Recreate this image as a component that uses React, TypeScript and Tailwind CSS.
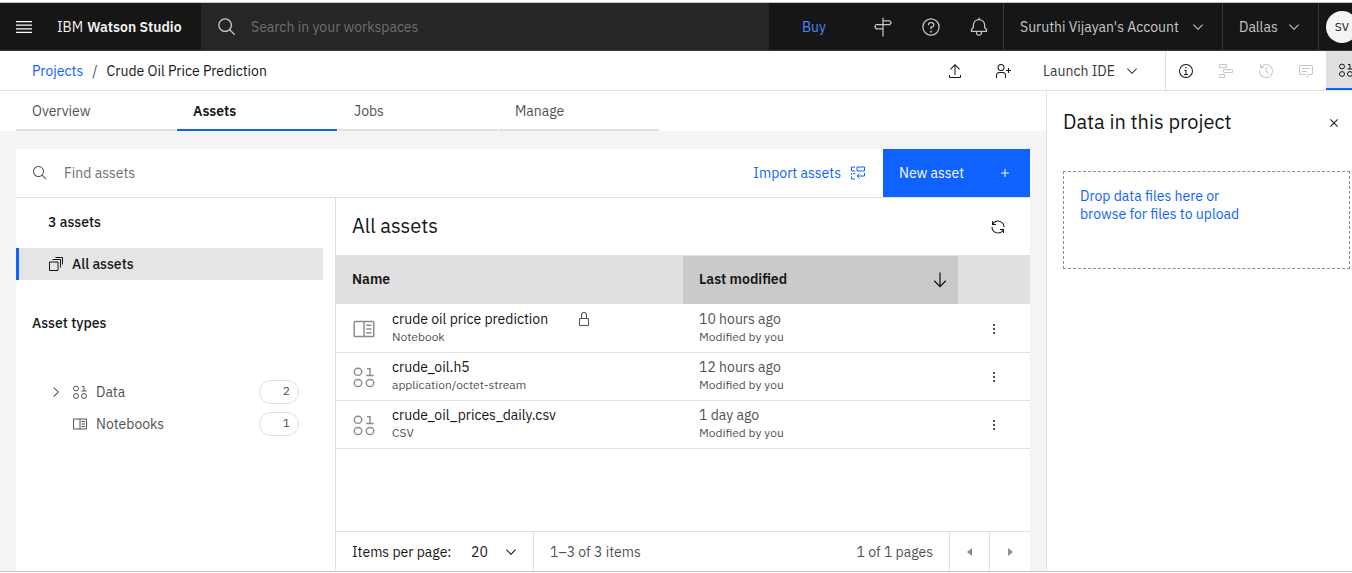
import type { ReactNode } from "react";

type IconProps = { className?: string };

function Icon({ className = "size-4", children }: IconProps & { children: ReactNode }) {
  return (
    <svg viewBox="0 0 32 32" fill="currentColor" aria-hidden="true" className={`shrink-0 ${className}`}>
      {children}
    </svg>
  );
}

const SearchIcon = ({ className }: IconProps) => (
  <Icon className={className}>
    <path d="M29 27.586l-7.552-7.552a11.018 11.018 0 1 0-1.414 1.414L27.586 29zM4 13a9 9 0 1 1 9 9 9.01 9.01 0 0 1-9-9z" />
  </Icon>
);

const ChevronDown = ({ className }: IconProps) => (
  <Icon className={className}>
    <path d="M16 22L6 12l1.4-1.4 8.6 8.6 8.6-8.6L26 12z" />
  </Icon>
);

const DataIcon = ({ className }: IconProps) => (
  <Icon className={className}>
    <g fill="none" stroke="currentColor" strokeWidth="2">
      <ellipse cx="8" cy="9" rx="5" ry="4.8" />
      <ellipse cx="8" cy="24" rx="5" ry="4.8" />
      <ellipse cx="24" cy="24" rx="5" ry="4.8" />
      <path d="M20 5h4v9M19 14h10" />
    </g>
  </Icon>
);

const NotebookIcon = ({ className }: IconProps) => (
  <Icon className={className}>
    <path d="M19 10h7v2h-7zM19 15h7v2h-7zM19 20h7v2h-7z" />
    <path d="M28 5H4a2 2 0 0 0-2 2v18a2 2 0 0 0 2 2h24a2 2 0 0 0 2-2V7a2 2 0 0 0-2-2zM4 7h11v18H4zm13 18V7h11v18z" />
  </Icon>
);

const rows = [
  { name: "crude oil price prediction", kind: "Notebook", time: "10 hours ago", notebook: true },
  { name: "crude_oil.h5", kind: "application/octet-stream", time: "12 hours ago", notebook: false },
  { name: "crude_oil_prices_daily.csv", kind: "CSV", time: "1 day ago", notebook: false },
];

const tabs = ["Overview", "Assets", "Jobs", "Manage"];

function TopBar() {
  return (
    <header className="mt-0.5 flex h-[49px] items-stretch border-t border-b border-t-[#c6c6c6] border-b-[#393939] bg-[#161616] text-[#c6c6c6]">
      <button aria-label="Menu" className="flex w-12 items-center justify-center text-white">
        <svg viewBox="0 0 20 20" fill="currentColor" className="size-5">
          <path d="M2 14.8h16V16H2zM2 11.2h16v1.2H2zM2 7.6h16v1.2H2zM2 4h16v1.2H2z" />
        </svg>
      </button>
      <a href="#" className="flex w-[153px] items-center gap-1 pl-[9px] whitespace-nowrap text-[#f4f4f4]">
        <span>IBM</span>
        <span className="font-semibold">Watson Studio</span>
      </a>
      <label className="flex min-w-0 flex-1 items-center gap-3.5 bg-[#262626] pl-4">
        <SearchIcon className="size-5" />
        <input
          aria-label="Search in your workspaces"
          placeholder="Search in your workspaces"
          className="min-w-0 flex-1 bg-transparent outline-none placeholder:text-[#6f6f6f]"
        />
      </label>
      <a href="#" className="flex w-[90px] items-center justify-center text-[#4589ff]">
        Buy
      </a>
      <button aria-label="Tutorials" className="flex w-12 items-center justify-center">
        <Icon className="size-5">
          <path
            fill="none"
            stroke="currentColor"
            strokeWidth="2"
            d="M16 1v30M16 6h11l2 3-2 3H5l-2 3.500 2 3.500h11"
          />
        </Icon>
      </button>
      <button aria-label="Help" className="flex w-12 items-center justify-center">
        <Icon className="size-5">
          <path d="M16 2a14 14 0 1 0 14 14A14 14 0 0 0 16 2zm0 26a12 12 0 1 1 12-12 12 12 0 0 1-12 12z" />
          <circle cx="16" cy="23.5" r="1.5" />
          <path d="M17 8h-1.500a4.490 4.490 0 0 0-4.500 4.500v.5h2v-.5a2.500 2.500 0 0 1 2.500-2.500H17a2.500 2.500 0 0 1 0 5h-2v4.500h2V17a4.500 4.500 0 0 0 0-9z" />
        </Icon>
      </button>
      <button aria-label="Notifications" className="flex w-12 items-center justify-center">
        <Icon className="size-5">
          <path d="M28.707 19.293L26 16.586V13a10.014 10.014 0 0 0-9-9.950V1h-2v2.050A10.014 10.014 0 0 0 6 13v3.586l-2.707 2.707A1 1 0 0 0 3 20v3a1 1 0 0 0 1 1h7v.777a5.152 5.152 0 0 0 4.500 5.199A5.006 5.006 0 0 0 21 25v-1h7a1 1 0 0 0 1-1v-3a1 1 0 0 0-.293-.707zM19 25a3 3 0 0 1-6 0v-1h6zm8-3H5v-1.586l2.707-2.707A1 1 0 0 0 8 17v-4a8 8 0 0 1 16 0v4a1 1 0 0 0 .293.707L27 20.414z" />
        </Icon>
      </button>
      <button className="flex w-[219px] items-center justify-between border-l border-[#393939] px-4 whitespace-nowrap">
        Suruthi Vijayan's Account
        <ChevronDown />
      </button>
      <button className="flex w-24 items-center justify-between border-l border-[#393939] px-4">
        Dallas
        <ChevronDown />
      </button>
      <button aria-label="Profile" className="flex w-[34px] items-center overflow-hidden border-l border-[#393939] pl-[7px]">
        <span className="flex size-8 shrink-0 items-center justify-center rounded-full bg-[#f4f4f4] text-xs text-[#161616]">SV</span>
      </button>
    </header>
  );
}

function ProjectBar() {
  return (
    <div className="flex h-10 items-stretch border-b border-[#e0e0e0]">
      <nav aria-label="Breadcrumb" className="flex flex-1 items-center gap-[9px] pl-8">
        <a href="#" className="text-[#0f62fe]">Projects</a>
        <span className="text-[#525252]">/</span>
        <span>Crude Oil Price Prediction</span>
      </nav>
      <button aria-label="Upload" className="flex w-12 items-center justify-center">
        <Icon>
          <path d="M26 24v4H6v-4H4v4a2 2 0 0 0 2 2h20a2 2 0 0 0 2-2v-4zM6 12l1.411 1.405L15 5.825V24h2V5.825l7.591 7.580L26 12 16 2z" />
        </Icon>
      </button>
      <button aria-label="Add collaborators" className="flex w-12 items-center justify-center">
        <Icon>
          <path d="M32 14h-4v-4h-2v4h-4v2h4v4h2v-4h4zM12 4a5 5 0 1 1-5 5 5 5 0 0 1 5-5m0-2a7 7 0 1 0 7 7 7 7 0 0 0-7-7zM22 30h-2v-5a5 5 0 0 0-5-5H9a5 5 0 0 0-5 5v5H2v-5a7 7 0 0 1 7-7h6a7 7 0 0 1 7 7z" />
        </Icon>
      </button>
      <button className="flex w-[138px] items-center gap-[9px] pl-4 text-[#393939]">
        Launch IDE
        <ChevronDown />
      </button>
      <div className="flex border-l border-[#e0e0e0]">
        <button aria-label="Information" className="flex w-10 items-center justify-center">
          <Icon>
            <path d="M17 22v-8h-4v2h2v6h-3v2h8v-2zM16 8a1.500 1.500 0 1 0 1.500 1.500A1.500 1.500 0 0 0 16 8z" />
            <path d="M16 30a14 14 0 1 1 14-14 14 14 0 0 1-14 14zm0-26a12 12 0 1 0 12 12A12 12 0 0 0 16 4z" />
          </Icon>
        </button>
        <button aria-label="Roadmap" className="flex w-10 items-center justify-center text-[#c6c6c6]">
          <Icon>
            <path fill="none" stroke="currentColor" strokeWidth="2" d="M3 3h14v6H3zM11 13h18v6H11zM3 23h10v6H3z" />
          </Icon>
        </button>
        <button aria-label="History" className="flex w-10 items-center justify-center text-[#c6c6c6]">
          <Icon>
            <path d="M20.590 22L15 16.410V7h2v8.580l5 5.010z" />
            <path d="M16 2A13.940 13.940 0 0 0 6 6.230V2H4v8h8V8H7.080A12 12 0 1 1 4 16H2A14 14 0 1 0 16 2z" />
          </Icon>
        </button>
        <button aria-label="Comments" className="flex w-10 items-center justify-center text-[#c6c6c6]">
          <Icon>
            <path d="M17.740 30L16 29l4-7h6a2 2 0 0 0 2-2V8a2 2 0 0 0-2-2H6a2 2 0 0 0-2 2v12a2 2 0 0 0 2 2h9v2H6a4 4 0 0 1-4-4V8a4 4 0 0 1 4-4h20a4 4 0 0 1 4 4v12a4 4 0 0 1-4 4h-4.840z" />
            <path d="M8 10h16v2H8zM8 16h10v2H8z" />
          </Icon>
        </button>
        <button
          aria-label="Data panel"
          className="flex w-[26px] items-center overflow-hidden border-b-2 border-[#0f62fe] bg-[#e0e0e0] pl-3"
        >
          <DataIcon />
        </button>
      </div>
    </div>
  );
}

function Sidebar() {
  return (
    <aside className="flex w-80 shrink-0 flex-col border-r border-[#e0e0e0]">
      <p className="mt-3.5 pl-8 text-sm/5 font-medium">3 assets</p>
      <button className="mt-4 mr-3 flex h-8 items-center gap-2 border-l-3 border-[#0f62fe] bg-[#e5e5e5] pl-[29px] font-medium">
        <Icon>
          <path fill="none" stroke="currentColor" strokeWidth="2" d="M3 12h17v17H3zM9 7h16v16M15 3h14v14" />
        </Icon>
        All assets
      </button>
      <h2 className="mt-[33px] pl-4 text-sm/5 font-medium">Asset types</h2>
      <ul className="mt-[47px] flex flex-col text-[#525252]">
        <li className="flex h-8 items-start pr-9 pl-8">
          <button className="flex h-6 flex-1 items-center gap-2">
            <Icon>
              <path d="M22 16L12 26l-1.400-1.400 8.600-8.600-8.600-8.600L12 6z" />
            </Icon>
            <DataIcon />
            Data
          </button>
          <span className="h-6 w-10 rounded-full border border-[#e0e0e0] pr-2 text-right text-xs/5">2</span>
        </li>
        <li className="flex h-8 items-start pr-9 pl-14">
          <button className="flex h-6 flex-1 items-center gap-2">
            <NotebookIcon />
            Notebooks
          </button>
          <span className="h-6 w-10 rounded-full border border-[#e0e0e0] pr-2 text-right text-xs/5">1</span>
        </li>
      </ul>
    </aside>
  );
}

function AssetTable() {
  return (
    <table className="w-full table-fixed border-separate border-spacing-0 text-left">
      <colgroup>
        <col />
        <col className="w-[275px]" />
        <col className="w-[72px]" />
      </colgroup>
      <thead>
        <tr className="h-[50px]">
          <th className="border-t border-b border-t-[#e0e0e0] border-b-white bg-[#e0e0e0] pb-0.5 pl-4 font-semibold">Name</th>
          <th aria-sort="descending" className="border-t border-b border-t-[#e0e0e0] border-b-white bg-[#cacaca] pr-2 pl-4 font-semibold">
            <button className="flex w-full items-center justify-between">
              <span className="pb-0.5">Last modified</span>
              <Icon className="size-5">
                <path d="M24.590 16.590L17 24.170V4h-2v20.170l-7.590-7.580L6 18l10 10 10-10z" />
              </Icon>
            </button>
          </th>
          <th aria-label="Actions" className="border-t border-b border-t-[#e0e0e0] border-b-white bg-[#e0e0e0]" />
        </tr>
      </thead>
      <tbody>
        {rows.map((row) => (
          <tr key={row.name} className="h-12">
            <td className="border-b border-[#e0e0e0] pl-4">
              <div className="flex items-center gap-4">
                {row.notebook ? (
                  <NotebookIcon className="size-6 text-[#8d8d8d]" />
                ) : (
                  <DataIcon className="size-6 text-[#8d8d8d]" />
                )}
                <div className="pb-[3px] text-xs/4 text-[#525252]">
                  <div className="flex items-center gap-7">
                    <a href="#" className="text-sm/5 text-[#161616]">{row.name}</a>
                    {row.notebook && (
                      <Icon className="size-4 text-[#525252]">
                        <path d="M24 14h-2V8a6 6 0 0 0-12 0v6H8a2 2 0 0 0-2 2v12a2 2 0 0 0 2 2h16a2 2 0 0 0 2-2V16a2 2 0 0 0-2-2zM12 8a4 4 0 0 1 8 0v6h-8zm12 20H8V16h16z" />
                      </Icon>
                    )}
                  </div>
                  {row.kind}
                </div>
              </div>
            </td>
            <td className="border-b border-[#e0e0e0] pb-[3px] pl-4 text-xs/4 text-[#525252]">
              <p className="text-sm/5">{row.time}</p>
              <p>Modified by you</p>
            </td>
            <td className="border-b border-[#e0e0e0] text-center">
              <button aria-label={`Actions for ${row.name}`} className="block w-full">
                <Icon className="mx-auto size-4">
                  <circle cx="16" cy="8" r="2" />
                  <circle cx="16" cy="16" r="2" />
                  <circle cx="16" cy="24" r="2" />
                </Icon>
              </button>
            </td>
          </tr>
        ))}
      </tbody>
    </table>
  );
}

function Pagination() {
  return (
    <footer className="mt-auto flex h-10 items-stretch border-t border-[#e0e0e0] text-[#525252]">
      <div className="flex w-[198px] items-center border-r border-[#e0e0e0] pl-4 text-[#161616]">
        <label htmlFor="page-size" className="w-[119px] whitespace-nowrap">Items per page:</label>
        <div className="relative flex items-center">
          <select id="page-size" className="w-12 appearance-none bg-transparent">
            <option>20</option>
          </select>
          <ChevronDown className="pointer-events-none absolute right-0 size-4" />
        </div>
      </div>
      <span className="flex flex-1 items-center pl-4">1–3 of 3 items</span>
      <span className="flex items-center pr-4">1 of 1 pages</span>
      <button aria-label="Previous page" className="flex w-10 items-center justify-center border-l border-[#e0e0e0] text-[#8d8d8d]">
        <Icon>
          <path d="M20 24L10 16l10-8z" />
        </Icon>
      </button>
      <button aria-label="Next page" className="flex w-[41px] items-center justify-center border-l border-[#e0e0e0] text-[#8d8d8d]">
        <Icon>
          <path d="M12 8l10 8-10 8z" />
        </Icon>
      </button>
    </footer>
  );
}

export default function App() {
  return (
    <div className="flex min-h-screen flex-col bg-white pb-px font-['IBM_Plex_Sans',Roboto,sans-serif] text-sm text-[#161616]">
      <TopBar />
      <ProjectBar />
      <div className="flex flex-1 border-b border-[#c6c6c6]">
        <main className="flex min-w-0 flex-1 flex-col bg-[#f4f4f4]">
          <nav aria-label="Project" className="flex h-10 shrink-0 gap-px bg-white pl-4">
            {tabs.map((tab) => (
              <a
                key={tab}
                href="#"
                className={
                  tab === "Assets"
                    ? "flex w-40 items-center border-b-2 border-[#0f62fe] pt-0.5 pl-4 font-semibold"
                    : "flex w-40 items-center border-b-2 border-[#e0e0e0] pt-0.5 pl-4 text-[#525252]"
                }
              >
                {tab}
              </a>
            ))}
          </nav>
          <section className="mx-4 mt-[18px] flex flex-1 flex-col bg-white">
            <div className="flex h-[49px] items-stretch border-b border-[#e0e0e0]">
              <label className="flex min-w-0 flex-1 items-center gap-4 pl-4 text-[#525252]">
                <SearchIcon className="size-4" />
                <input
                  aria-label="Find assets"
                  placeholder="Find assets"
                  className="min-w-0 flex-1 bg-transparent outline-none placeholder:text-[#6f6f6f]"
                />
              </label>
              <button className="flex items-center gap-[9px] px-[17px] text-[#0f62fe]">
                Import assets
                <Icon>
                  <path
                    fill="none"
                    stroke="currentColor"
                    strokeWidth="2"
                    d="M10 4H3v8h7M14 4h15v8H14zM3 16v3M3 23v5h7M10 17H6M29 16v6H15M19 17l-5 5 5 5"
                  />
                </Icon>
              </button>
              <button className="flex w-[147px] items-center justify-between bg-[#0f62fe] pr-[17px] pl-4 text-white">
                New asset
                <Icon>
                  <path d="M17 15V8h-2v7H8v2h7v7h2v-7h7v-2z" />
                </Icon>
              </button>
            </div>
            <div className="flex flex-1">
              <Sidebar />
              <div className="flex min-w-0 flex-1 flex-col">
                <div className="flex h-[57px] items-center justify-between pr-6 pl-4">
                  <h1 className="pb-0.5 text-xl">All assets</h1>
                  <button aria-label="Refresh">
                    <Icon>
                      <path d="M12 10H6.780A11 11 0 0 1 27 16h2A13 13 0 0 0 6 7.680V4H4v8h8zM20 22h5.220A11 11 0 0 1 5 16H3a13 13 0 0 0 23 8.320V28h2v-8h-8z" />
                    </Icon>
                  </button>
                </div>
                <AssetTable />
                <Pagination />
              </div>
            </div>
          </section>
        </main>
        <aside className="w-[306px] shrink-0 border-l border-[#e0e0e0] pr-0.5 pl-4">
          <div className="flex h-16 items-center justify-between pr-2">
            <h2 className="pb-0.5 text-xl">Data in this project</h2>
            <button aria-label="Close">
              <Icon>
                <path d="M24 9.400L22.600 8 16 14.600 9.400 8 8 9.400l6.600 6.600L8 22.600 9.400 24l6.600-6.600 6.600 6.600 1.400-1.400-6.600-6.600z" />
              </Icon>
            </button>
          </div>
          <button className="mt-4 flex h-[98px] w-full items-start border border-dashed border-[#8d8d8d] px-4 pt-[15px] text-left text-sm/[18px] text-[#0f62fe]">
            <span>
              Drop data files here or
              <br />
              browse for files to upload
            </span>
          </button>
        </aside>
      </div>
    </div>
  );
}
